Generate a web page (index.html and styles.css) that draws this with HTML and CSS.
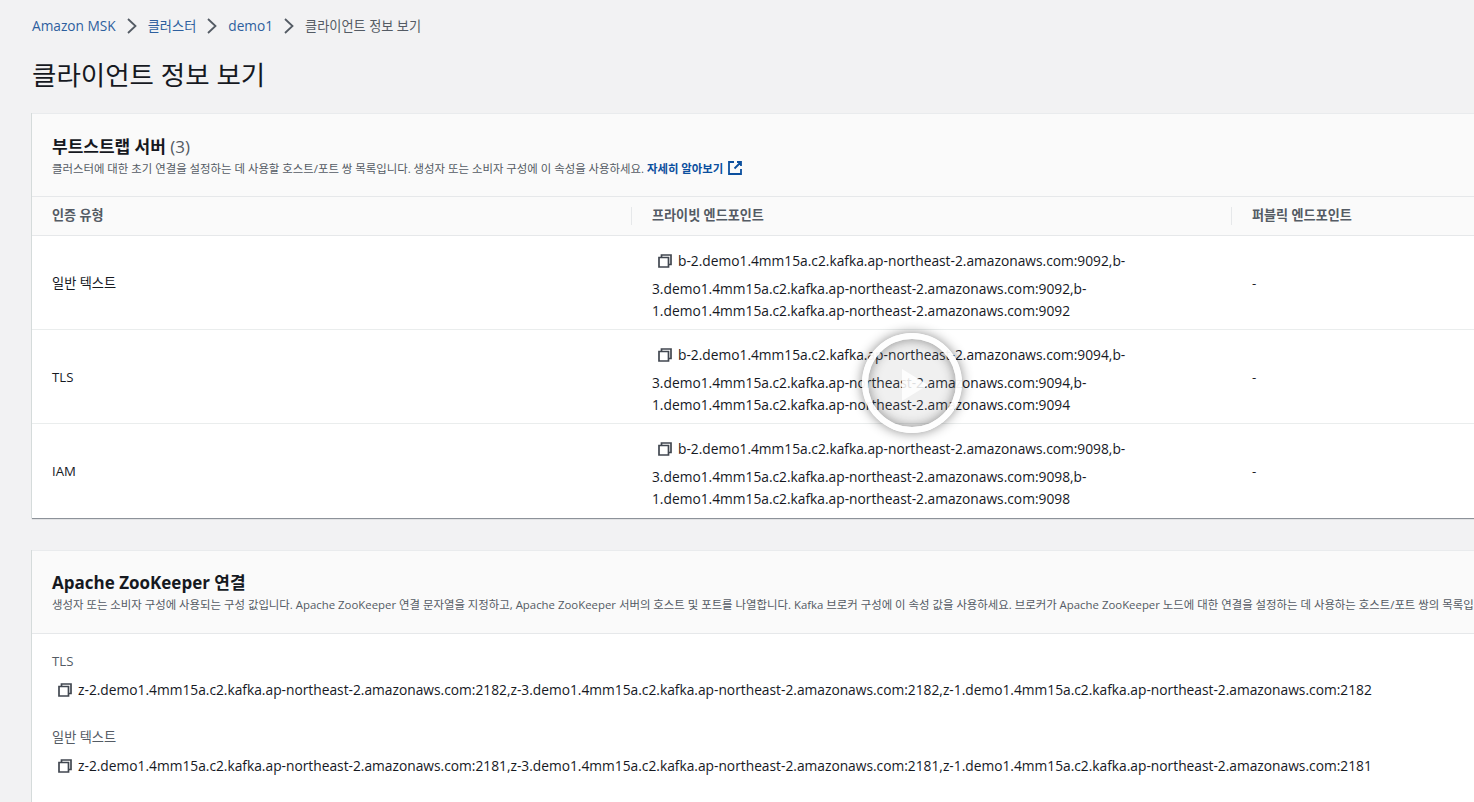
FILE: index.html
```html
<!DOCTYPE html>
<html lang="ko">
<head>
<meta charset="utf-8">
<title>클라이언트 정보 보기</title>
<link rel="stylesheet" href="styles.css">
</head>
<body>
<svg class="defs" width="0" height="0" aria-hidden="true">
  <symbol id="copy" viewBox="0 0 14 14"><path d="M3.5 3.5V1H13v9.5h-2.5M1 3.5h9.5V13H1z" fill="none" stroke="currentColor" stroke-width="1.7"/></symbol>
  <symbol id="chev" viewBox="0 0 12 16"><path d="M2 1 9.5 8 2 15" fill="none" stroke="currentColor" stroke-width="1.8"/></symbol>
</svg>
<main class="page">
  <nav class="crumbs">
    <a class="latin">Amazon MSK</a><svg class="chev"><use href="#chev"/></svg>
    <a>클러스터</a><svg class="chev"><use href="#chev"/></svg>
    <a class="latin">demo1</a><svg class="chev"><use href="#chev"/></svg>
    <span>클라이언트 정보 보기</span>
  </nav>
  <h1 class="title">클라이언트 정보 보기</h1>

  <section class="card">
    <header class="card-head">
      <h2 class="card-title">부트스트랩 서버 <span class="count">(3)</span></h2>
      <p class="card-desc">클러스터에 대한 초기 연결을 설정하는 데 사용할 호스트/포트 쌍 목록입니다. 생성자 또는 소비자 구성에 이 속성을 사용하세요. <a class="learn">자세히 알아보기 <svg class="ext" viewBox="0 0 16 16"><path d="M7 2H2v12h12V9M10 2h4v4M14 2 7.5 8.5" fill="none" stroke="currentColor" stroke-width="1.8"/></svg></a></p>
    </header>
    <div class="row thead">
      <div class="th">인증 유형</div>
      <div class="th">프라이빗 엔드포인트</div>
      <div class="th">퍼블릭 엔드포인트</div>
    </div>
    <div class="row">
      <div class="td">일반 텍스트</div>
      <div class="td ep"><span class="copy"><svg><use href="#copy"/></svg></span>b-2.demo1.4mm15a.c2.kafka.ap-northeast-2.amazonaws.com:9092,b-3.demo1.4mm15a.c2.kafka.ap-northeast-2.amazonaws.com:9092,b-1.demo1.4mm15a.c2.kafka.ap-northeast-2.amazonaws.com:9092</div>
      <div class="td">-</div>
    </div>
    <div class="row">
      <div class="td">TLS</div>
      <div class="td ep"><span class="copy"><svg><use href="#copy"/></svg></span>b-2.demo1.4mm15a.c2.kafka.ap-northeast-2.amazonaws.com:9094,b-3.demo1.4mm15a.c2.kafka.ap-northeast-2.amazonaws.com:9094,b-1.demo1.4mm15a.c2.kafka.ap-northeast-2.amazonaws.com:9094</div>
      <div class="td">-</div>
    </div>
    <div class="row last">
      <div class="td">IAM</div>
      <div class="td ep"><span class="copy"><svg><use href="#copy"/></svg></span>b-2.demo1.4mm15a.c2.kafka.ap-northeast-2.amazonaws.com:9098,b-3.demo1.4mm15a.c2.kafka.ap-northeast-2.amazonaws.com:9098,b-1.demo1.4mm15a.c2.kafka.ap-northeast-2.amazonaws.com:9098</div>
      <div class="td">-</div>
    </div>
  </section>

  <section class="card">
    <header class="card-head zk">
      <h2 class="card-title">Apache ZooKeeper 연결</h2>
      <p class="card-desc">생성자 또는 소비자 구성에 사용되는 구성 값입니다. Apache ZooKeeper 연결 문자열을 지정하고, Apache ZooKeeper 서버의 호스트 및 포트를 나열합니다. Kafka 브로커 구성에 이 속성 값을 사용하세요. 브로커가 Apache ZooKeeper 노드에 대한 연결을 설정하는 데 사용하는 호스트/포트 쌍의 목록입니다.</p>
    </header>
    <div class="kv-list">
      <div class="kv">
        <div class="kv-label">TLS</div>
        <div class="kv-value"><span class="copy"><svg><use href="#copy"/></svg></span>z-2.demo1.4mm15a.c2.kafka.ap-northeast-2.amazonaws.com:2182,z-3.demo1.4mm15a.c2.kafka.ap-northeast-2.amazonaws.com:2182,z-1.demo1.4mm15a.c2.kafka.ap-northeast-2.amazonaws.com:2182</div>
      </div>
      <div class="kv">
        <div class="kv-label">일반 텍스트</div>
        <div class="kv-value"><span class="copy"><svg><use href="#copy"/></svg></span>z-2.demo1.4mm15a.c2.kafka.ap-northeast-2.amazonaws.com:2181,z-3.demo1.4mm15a.c2.kafka.ap-northeast-2.amazonaws.com:2181,z-1.demo1.4mm15a.c2.kafka.ap-northeast-2.amazonaws.com:2181</div>
      </div>
    </div>
  </section>
</main>
<div class="play">
  <svg viewBox="0 0 100 100"><path d="M40 36v32l26-16z" fill="#fff" fill-opacity=".85"/></svg>
</div>
</body>
</html>
```
FILE: styles.css
```css
* { box-sizing: border-box; }
html, body { margin: 0; height: 802px; overflow: hidden; }
body {
  background: #f2f2f3;
  color: #16191f;
  font: 13.78px/22px "Open Sans", "Noto Sans CJK KR", sans-serif;
  position: relative;
}
.defs { position: absolute; }
.page { padding: 14px 0 0 32px; width: 1900px; height: 802px; overflow: hidden; }
.crumbs { display: flex; align-items: center; height: 24px; font-size: 13.2px; color: #545b64; }
.crumbs a { color: #2e5f9e; }
.crumbs .latin { font-size: 13.7px; }
.chev { width: 12px; height: 16px; margin: 0 10px; color: #545b64; }
.title { margin: 18px 0 19px; font-size: 26.5px; line-height: 38px; font-weight: 400; color: #16191f; }
.card {
  background: #fff;
  width: 1832px;
  margin-bottom: 32px;
  border-top: 1px solid #e9ebed;
  box-shadow: -1px 0 0 #d5dbdb, 0 1px 1px 0 #8d9299;
}
.card-head { background: #fafafa; padding: 20px 20px 0; height: 83px; border-bottom: 1px solid #e6e8ea; }
.card-head.zk { padding-top: 19px; }
.card-title { margin: 0; font-size: 17px; line-height: 25px; font-weight: 700; color: #16191f; }
.count { font-weight: 400; color: #545b64; }
.card-desc { margin: 1px 0 0; font-size: 11.4px; line-height: 18px; color: #545b64; white-space: nowrap; }
.learn { color: #0b4f9e; font-weight: 700; }
.ext { width: 16px; height: 16px; vertical-align: -3px; margin-left: 1px; }
.row { display: grid; grid-template-columns: 600px 600px 632px; border-bottom: 1px solid #eaeded; }
.row.last { border-bottom: 0; min-height: 94px; }
.thead { background: #fafafa; height: 39px; border-bottom: 1px solid #e6e8ea; }
.th { display: flex; align-items: center; padding: 0 20px 2px; font-weight: 700; font-size: 13.1px; color: #545b64; position: relative; }
.th + .th::before { content: ""; position: absolute; left: -1px; top: 10px; bottom: 10px; width: 1px; background: #e6e8ea; }
.td { display: flex; align-items: center; padding: 8px 20px; min-height: 93px; font-size: 13.2px; }
.td.ep { display: block; padding: 9px 20px 7px; font-size: 13.78px; }
.copy { display: inline-block; height: 33px; padding: 9px 6px 0; vertical-align: -12px; overflow: hidden; color: #414750; }
.copy svg { display: block; width: 14px; height: 14px; }
.kv-list { padding: 16px 20px 40px; }
.kv { margin-bottom: 19px; }
.kv-label { color: #545b64; font-size: 13.2px; line-height: 22px; }
.kv-value { white-space: nowrap; line-height: 33px; margin-top: 1px; }
.play {
  position: absolute;
  left: 862px;
  top: 333px;
  width: 100px;
  height: 100px;
  border-radius: 50%;
  border: 6px solid rgba(255,255,255,.94);
  background: rgba(150,150,150,.14);
  box-shadow: 0 0 12px rgba(0,0,0,.45), inset 0 0 12px rgba(0,0,0,.42);
}
.play svg { position: absolute; inset: -6px; width: 100px; height: 100px; }
```
